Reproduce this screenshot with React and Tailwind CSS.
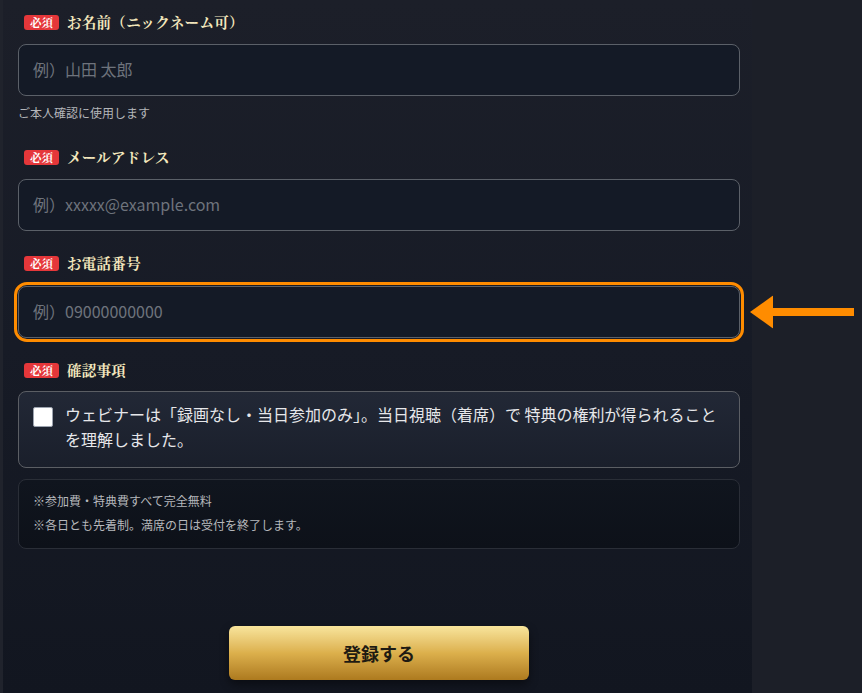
import React from "react";

const sans = { fontFamily: '"Noto Sans CJK JP", "Noto Sans", sans-serif' };
const serif = { fontFamily: '"Noto Serif CJK JP", "Noto Sans CJK JP", serif' };

function Label({ children, className = "" }) {
  return (
    <div className={`flex items-center h-5 ${className}`}>
      <span
        className="ml-[6px] inline-flex items-center justify-center h-[15px] px-[6px] rounded-[3px] bg-[#e5373a] text-white text-[11.5px] font-bold leading-[15px]"
        style={serif}
      >
        必須
      </span>
      <span className="ml-2 text-[14.5px] font-bold text-[#f3e7bd] tracking-[0.02em]" style={serif}>
        {children}
      </span>
    </div>
  );
}

function Field({ placeholder }) {
  return (
    <input
      type="text"
      placeholder={placeholder}
      className="block w-full h-[52px] rounded-[8px] border border-[#5b6068] bg-[#141a26] px-[14px] pb-[3px] text-[16px] text-white placeholder:text-[#6e737c] outline-none"
      style={sans}
    />
  );
}

export default function App() {
  return (
    <div className="flex min-h-[693px] w-full bg-[#1c1f28]" style={sans}>
      <div className="w-[752px] shrink-0 border-l-[3px] border-[#20232c] bg-gradient-to-b from-[#1c1f29] via-[#171b26] to-[#121620] pl-[15px] pr-[12px] pt-3 pb-[13px]">
        <Label>お名前（ニックネーム可）</Label>
        <div className="mt-3">
          <Field placeholder="例）山田 太郎" />
        </div>
        <p className="mt-2 text-[12px] leading-[18px] text-[#b4b6ba]">ご本人確認に使用します</p>

        <Label className="mt-[25px]">メールアドレス</Label>
        <div className="mt-3">
          <Field placeholder="例）xxxxx@example.com" />
        </div>

        <Label className="mt-[22px]">お電話番号</Label>
        <div className="relative mt-[13px] rounded-[9px] outline outline-[3px] outline-offset-[1px] outline-[#ff8c00]">
          <Field placeholder="例）09000000000" />
          <svg
            className="absolute top-1/2 -translate-y-1/2 left-[calc(100%+10px)]"
            width="104"
            height="33"
            viewBox="0 0 104 33"
          >
            <polygon points="0,16.5 23,0 23,33" fill="#ff8c00" />
            <rect x="20" y="12.5" width="84" height="8" fill="#ff8c00" />
          </svg>
        </div>

        <Label className="mt-[22px]">確認事項</Label>
        <div className="mt-[11px] flex items-start gap-3 rounded-[8px] border border-[#5b5e64] bg-gradient-to-b from-[#222836] to-[#1a1f2b] pl-[14px] pr-[14px] pt-[10px] pb-[15px]">
          <div className="mt-[5px] h-5 w-5 shrink-0 rounded-[2px] border border-[#9ca3af] bg-white" />
          <p className="text-[16px] leading-[25px] text-[#e6e7ea]">
            ウェビナーは「録画なし・当日参加のみ」。当日視聴（着席）で 特典の権利が得られること
            <br />
            を理解しました。
          </p>
        </div>

        <div className="mt-[11px] rounded-[8px] border border-[#2a2e37] bg-gradient-to-b from-[#10151e] to-[#0d1119] px-[14px] pt-[9px] pb-[11px] text-[12px] leading-[24px] text-[#b6b8bc]">
          <p>※参加費・特典費すべて完全無料</p>
          <p>※各日とも先着制。満席の日は受付を終了します。</p>
        </div>

        <div className="mt-[77px] flex justify-center">
          <button
            type="button"
            className="h-[54px] w-[300px] rounded-[6px] bg-gradient-to-b from-[#f8e59c] via-[#dcb04c] to-[#ad7a1e] text-[18px] font-bold text-[#1e1a12] shadow-[0_4px_10px_rgba(0,0,0,0.45)]"
            style={sans}
          >
            登録する
          </button>
        </div>
      </div>
      <div className="flex-1" />
    </div>
  );
}
